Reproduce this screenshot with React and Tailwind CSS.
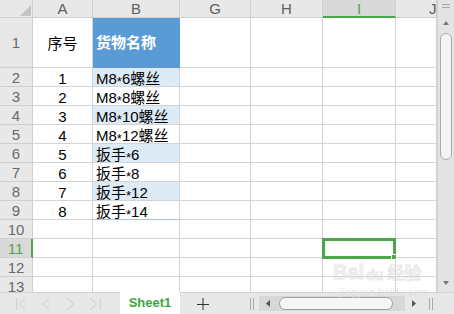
import React from "react";

function Corner() {
  return (
    <div className="relative bg-[#e8e8e8] border-r border-b border-[#cfcfcf]">
      <svg className="absolute left-[20px] top-[5px]" width="11" height="11" viewBox="0 0 11 11">
        <polygon points="11,0 11,11 0,11" fill="#c4c4c4" />
      </svg>
    </div>
  );
}

function ColHead({ label, selected, clipped }) {
  return (
    <div
      className={
        "flex items-center text-[15px] leading-none border-r border-b " +
        (clipped ? "justify-start pl-[33px] " : "justify-center ") +
        (selected
          ? "bg-[#d9d9d9] text-[#4ca64c] border-r-[#cfcfcf] border-b-2 border-b-[#4ca64c]"
          : "bg-[#e8e8e8] text-[#5f5f5f] border-[#cfcfcf]")
      }
    >
      {label}
    </div>
  );
}

function RowHead({ n, selected }) {
  return (
    <div
      className={
        "flex items-center justify-center text-[15px] leading-none border-b border-[#cfcfcf] " +
        (selected
          ? "bg-[#d9d9d9] text-[#4ca64c] border-r-2 border-r-[#4ca64c]"
          : "bg-[#e8e8e8] text-[#6a6a6a] border-r")
      }
    >
      {n}
    </div>
  );
}

const data = [
  ["序号", "货物名称"],
  ["1", "M8*6螺丝"],
  ["2", "M8*8螺丝"],
  ["3", "M8*10螺丝"],
  ["4", "M8*12螺丝"],
  ["5", "扳手*6"],
  ["6", "扳手*8"],
  ["7", "扳手*12"],
  ["8", "扳手*14"],
];

function Star({ text }) {
  const i = text.indexOf("*");
  if (i < 0) return text;
  return (
    <>
      {text.slice(0, i)}
      <span className="relative top-[3px] text-[13px]">*</span>
      {text.slice(i + 1)}
    </>
  );
}

function Cell({ children, className = "" }) {
  return <div className={"border-r border-b border-[#d4d4d4] bg-white " + className}>{children}</div>;
}

export default function App() {
  const rows = Array.from({ length: 13 }, (_, i) => i + 1);
  return (
    <div className="relative w-[454px] h-[314px] overflow-hidden bg-white text-black font-['Liberation_Sans','Noto_Sans_CJK_SC',sans-serif]">
      <div className="flex h-[292px]">
        <div className="w-[437px] h-[292px] overflow-hidden">
          <div className="grid grid-cols-[33px_60px_87px_71px_72px_73px_41px] grid-rows-[18px_50px_repeat(12,19px)]">
            <Corner />
            <ColHead label="A" />
            <ColHead label="B" />
            <ColHead label="G" />
            <ColHead label="H" />
            <ColHead label="I" selected />
            <ColHead label="J" clipped />
            {rows.map((r) => {
              const d = data[r - 1];
              const isHeader = r === 1;
              const fill = r >= 2 && r <= 9 && r % 2 === 0;
              return (
                <React.Fragment key={r}>
                  <RowHead n={r} selected={r === 11} />
                  <Cell className="flex items-center justify-center text-[15px] leading-none pt-[2px]">
                    {d ? d[0] : ""}
                  </Cell>
                  <div
                    className={
                      "flex items-center pl-[3px] text-[15px] leading-none border-r border-b " +
                      (isHeader
                        ? "bg-[#5b9bd5] text-white font-bold border-[#5b9bd5] "
                        : fill
                        ? "bg-[#ddebf7] border-[#d4d4d4] pt-[2px] "
                        : "bg-white border-[#d4d4d4] pt-[2px] ") +
                      (r === 9 ? "border-b-[#9dc3e6]" : "")
                    }
                  >
                    {d ? <Star text={d[1]} /> : ""}
                  </div>
                  <Cell />
                  <Cell />
                  {r === 11 ? (
                    <div className="relative border-r border-b border-[#d4d4d4] bg-white">
                      <div className="absolute left-[-1px] top-[-1px] w-[74px] h-[21px] border-[3px] border-[#4ca64c]" />
                      <div className="absolute left-[68px] top-[15px] w-[6px] h-[6px] bg-[#4ca64c] border border-white" />
                    </div>
                  ) : (
                    <Cell />
                  )}
                  <Cell />
                </React.Fragment>
              );
            })}
          </div>
        </div>
        {/* vertical scrollbar */}
        <div className="relative w-[17px] h-[292px] bg-[#e4e4e4] border-l border-[#d0d0d0]">
          <div className="absolute left-[4px] top-[4px] w-[8px] h-[4px] border-t border-b border-[#a8a8a8]" />
          <svg className="absolute left-[4px] top-[20px]" width="8" height="6" viewBox="0 0 8 6">
            <polygon points="4,1 7,5 1,5" fill="#7a7a7a" />
          </svg>
          <div className="absolute left-[2px] top-[33px] w-[12px] h-[127px] rounded-full bg-[#f4f4f4] border border-[#a9a9a9]" />
          <svg className="absolute left-[4px] top-[280px]" width="8" height="6" viewBox="0 0 8 6">
            <polygon points="1,1 7,1 4,5" fill="#7a7a7a" />
          </svg>
        </div>
      </div>
      {/* bottom bar */}
      <div className="flex h-[22px] bg-[#e8e8e8] border-t border-[#d0d0d0]">
        <div className="flex items-center w-[120px] pl-[14px]">
          <svg width="110" height="14" viewBox="0 0 110 14" fill="none" stroke="#cdcdcd" strokeWidth="1">
            <line x1="2.5" y1="1" x2="2.5" y2="13" />
            <polyline points="12,1 5,7 12,13" />
            <polyline points="37,1 30,7 37,13" />
            <polyline points="55,1 62,7 55,13" />
            <polyline points="79,1 86,7 79,13" />
            <line x1="89.5" y1="1" x2="89.5" y2="13" />
          </svg>
        </div>
        <div className="flex items-center justify-center w-[60px] h-[22px] mt-[-1px] bg-white text-[13px] font-bold text-[#3fa63f]">
          Sheet1
        </div>
        <div className="flex items-center justify-center w-[46px]">
          <svg width="14" height="14" viewBox="0 0 14 14" stroke="#333" strokeWidth="1">
            <line x1="7" y1="1" x2="7" y2="13" />
            <line x1="1" y1="7.5" x2="13" y2="7.5" />
          </svg>
        </div>
        <div className="flex items-center w-[228px]">
          <div className="w-[4px] h-[12px] ml-[24px] border-l border-r border-[#aaaaaa]" />
          <div className="relative ml-[5px] w-[146px] h-[15px] bg-[#d8d8d8]">
            <svg className="absolute left-[7px] top-[4px]" width="5" height="7" viewBox="0 0 5 7">
              <polygon points="4,0 4,7 0,3.5" fill="#555" />
            </svg>
            <div className="absolute left-[20px] top-[1px] w-[114px] h-[13px] rounded-full bg-[#f6f6f6] border border-[#9e9e9e]" />
            <svg className="absolute left-[152px] top-[4px]" width="5" height="7" viewBox="0 0 5 7">
              <polygon points="1,0 1,7 5,3.5" fill="#555" />
            </svg>
          </div>
          <div className="w-[4px] h-[12px] ml-[24px] border-l border-r border-[#aaaaaa]" />
        </div>
      </div>
      {/* watermark */}
      <div className="pointer-events-none absolute left-[333px] top-[262px] flex items-end opacity-50">
        <span className="text-[20px] font-bold text-[#e6e6e6] leading-none" style={{ WebkitTextStroke: "1px #d4d4d4" }}>Bai</span>
        <span className="ml-[2px] text-[14px] font-bold text-[#e6e6e6] leading-none" style={{ WebkitTextStroke: "1px #d4d4d4" }}>du</span>
        <span className="ml-[4px] text-[17px] text-[#e6e6e6] leading-none" style={{ WebkitTextStroke: "1px #d4d4d4" }}>经验</span>
      </div>
      <div className="pointer-events-none absolute left-[340px] top-[287px] text-[11px] text-[#dcdcdc] leading-none opacity-70">
        jingyan.baidu.com
      </div>
    </div>
  );
}
